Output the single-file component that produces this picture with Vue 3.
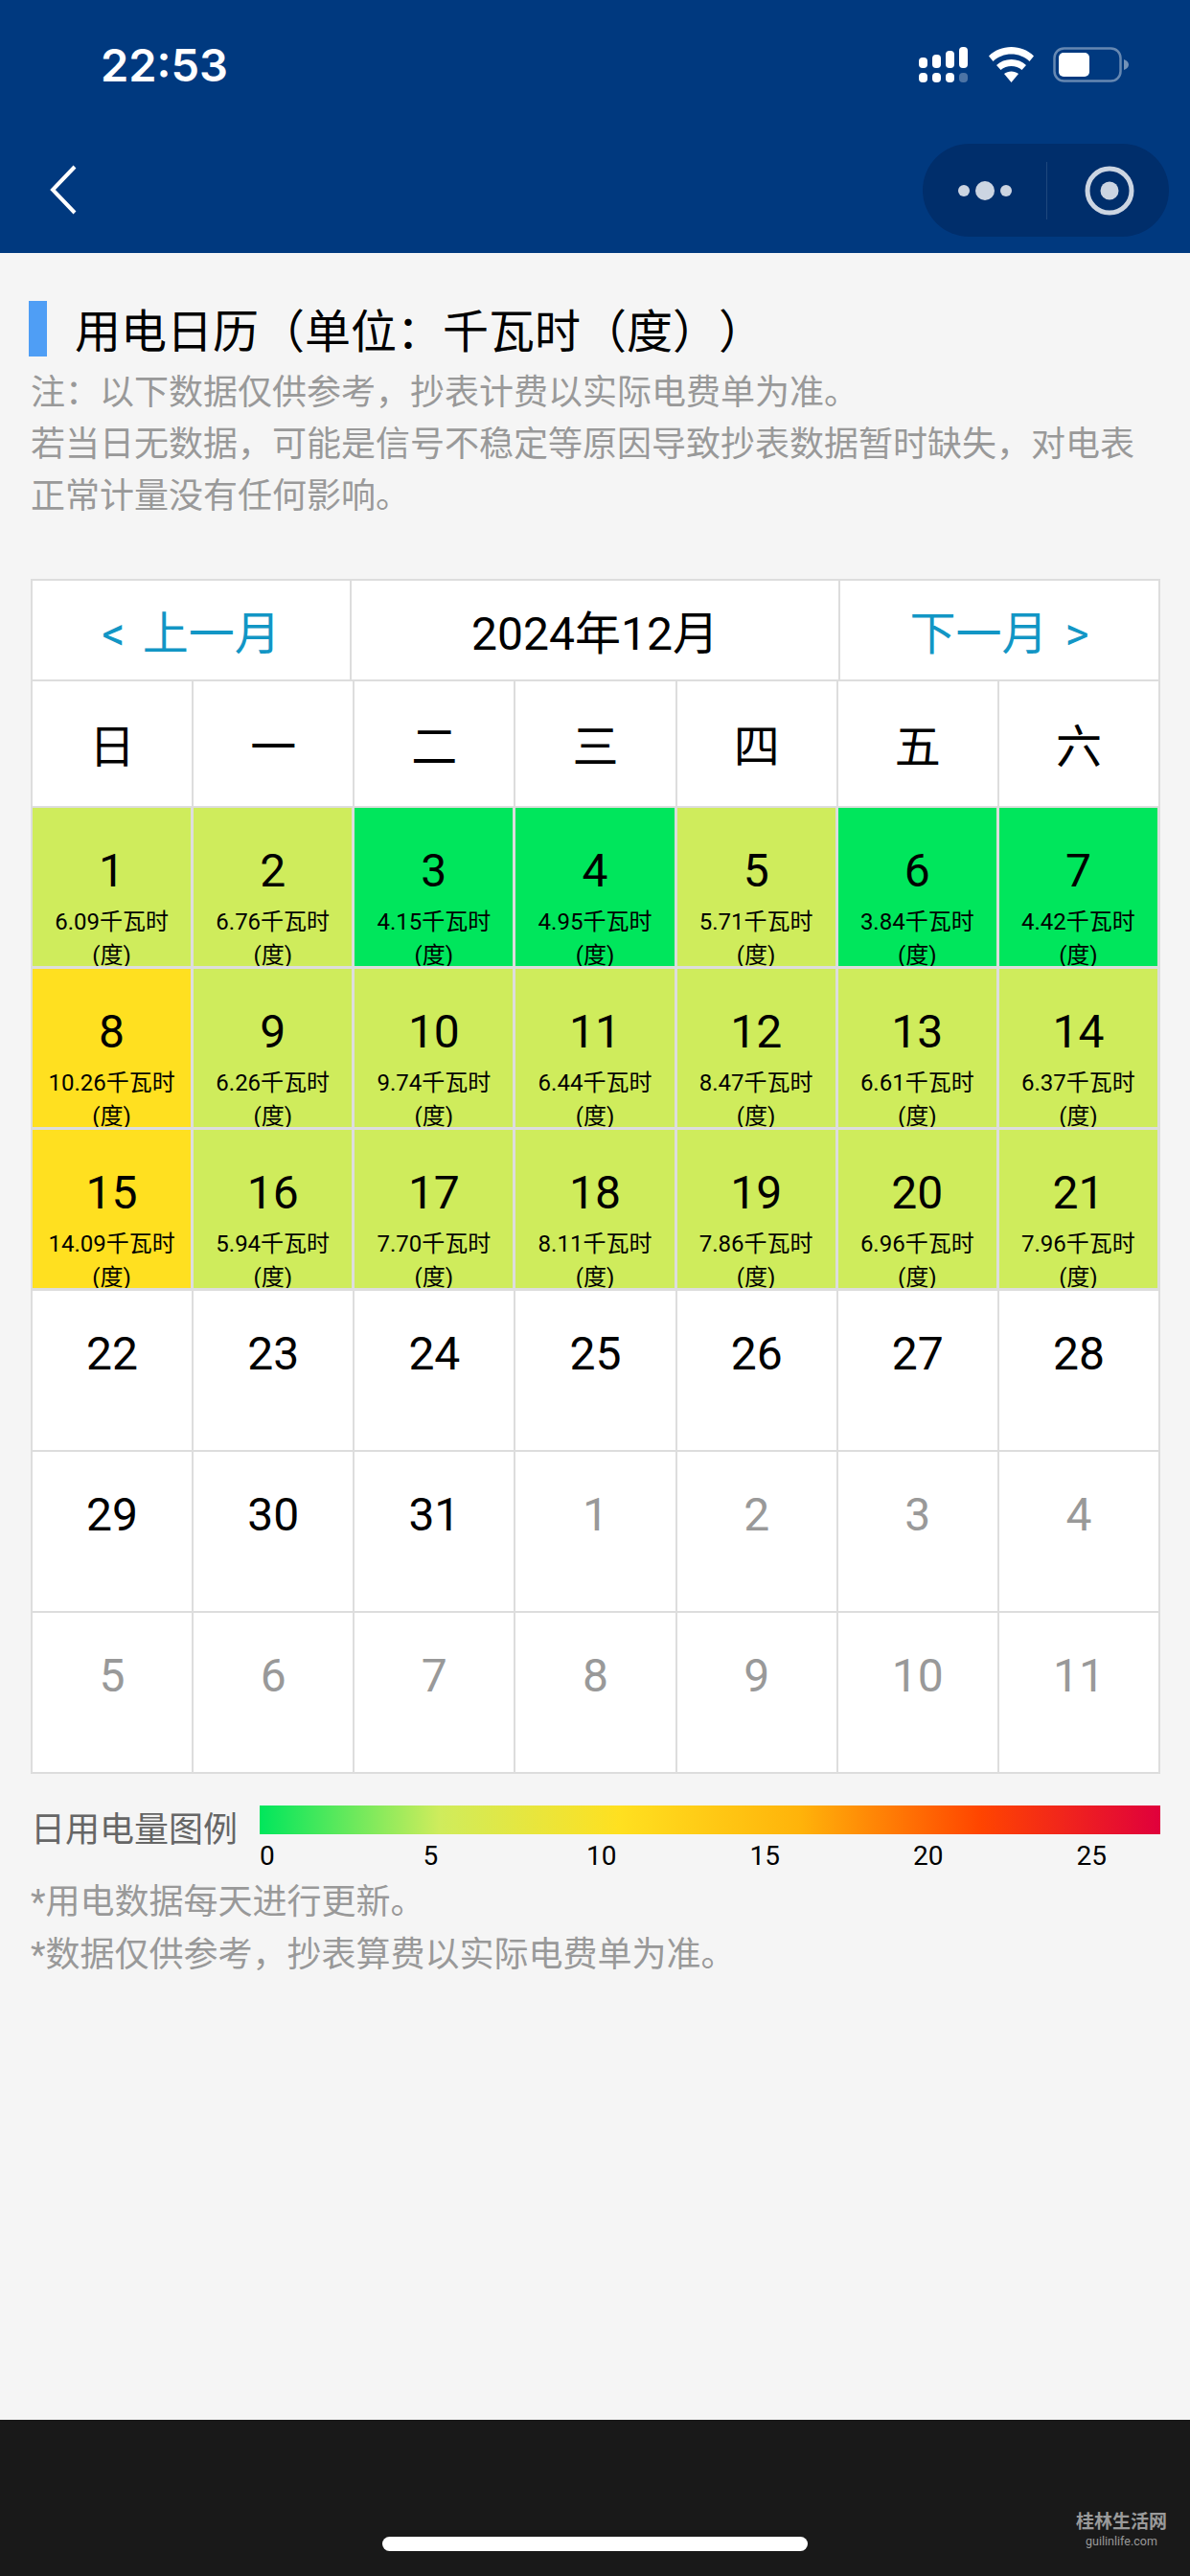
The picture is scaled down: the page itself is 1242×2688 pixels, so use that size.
<script setup>
const usage = {
  1: ['6.09', 'lime'], 2: ['6.76', 'lime'], 3: ['4.15', 'green'], 4: ['4.95', 'green'], 5: ['5.71', 'lime'], 6: ['3.84', 'green'], 7: ['4.42', 'green'],
  8: ['10.26', 'yellow'], 9: ['6.26', 'lime'], 10: ['9.74', 'lime'], 11: ['6.44', 'lime'], 12: ['8.47', 'lime'], 13: ['6.61', 'lime'], 14: ['6.37', 'lime'],
  15: ['14.09', 'yellow'], 16: ['5.94', 'lime'], 17: ['7.70', 'lime'], 18: ['8.11', 'lime'], 19: ['7.86', 'lime'], 20: ['6.96', 'lime'], 21: ['7.96', 'lime']
}
const weekdays = ['日', '一', '二', '三', '四', '五', '六']
const days = []
for (let d = 1; d <= 31; d++) {
  const u = usage[d]
  days.push({ key: 'c' + d, num: d, value: u ? u[0] : '', tone: u ? u[1] : '', muted: false })
}
for (let d = 1; d <= 11; d++) {
  days.push({ key: 'n' + d, num: d, value: '', tone: '', muted: true })
}
const scale = [0, 5, 10, 15, 20, 25]
</script>

<template>
  <div class="page">
    <header class="head">
      <div class="status">
        <span class="time">22:53</span>
        <div class="status-icons">
          <svg class="signal" width="51" height="37" viewBox="0 0 51 37">
            <g fill="#fff">
              <rect x="0" y="11" width="9" height="11" rx="4" />
              <rect x="14" y="8" width="9" height="14" rx="4" />
              <rect x="28" y="4" width="9" height="18" rx="4" />
              <rect x="42" y="0" width="9" height="22" rx="4" />
              <rect x="0" y="27" width="9" height="10" rx="4" />
              <rect x="14" y="27" width="9" height="10" rx="4" />
              <rect x="28" y="27" width="9" height="10" rx="4" />
              <rect x="42" y="27" width="9" height="10" rx="4" opacity="0.3" />
            </g>
          </svg>
          <svg class="wifi" width="47" height="37" viewBox="0 0 47 37">
            <g fill="#fff">
              <path d="M0 9.500C6 3.500 14.500 0 23.500 0S41 3.500 47 9.500L42.500 15C37.500 10 30.500 7.500 23.500 7.500S9.500 10 4.500 15Z" />
              <path d="M8 19C12 15 17.500 13 23.500 13S35 15 39 19L34.500 24C31.500 21.500 27.500 20 23.500 20S15.500 21.500 12.500 24Z" />
              <path d="M16 28C18 26.500 20.800 25.500 23.500 25.500S29 26.500 31 28L23.500 37Z" />
            </g>
          </svg>
          <svg class="battery" width="79" height="37" viewBox="0 0 79 37">
            <rect x="1.500" y="1.500" width="69" height="34" rx="10" fill="none" stroke="#fff" stroke-opacity="0.4" stroke-width="2.500" />
            <rect x="6" y="6" width="32" height="25" rx="5" fill="#fff" />
            <path d="M74 13C77 14 79 16 79 18.500S77 23 74 24Z" fill="#fff" fill-opacity="0.45" />
          </svg>
        </div>
      </div>
      <div class="navbar">
        <svg class="back" width="28" height="52" viewBox="0 0 28 52">
          <path d="M26 2L3 26L26 50" fill="none" stroke="#fff" stroke-width="4" />
        </svg>
        <div class="capsule">
          <svg class="dots" width="62" height="20" viewBox="0 0 62 20">
            <g fill="#ccd5e2">
              <circle cx="6" cy="10" r="6" />
              <circle cx="28" cy="10" r="10" />
              <circle cx="50" cy="10" r="6" />
            </g>
          </svg>
          <span class="capsule-line"></span>
          <svg class="target" width="52" height="52" viewBox="0 0 52 52">
            <circle cx="26" cy="26" r="23" fill="none" stroke="#ccd5e2" stroke-width="5" />
            <circle cx="26" cy="26" r="9.500" fill="#ccd5e2" />
          </svg>
        </div>
      </div>
    </header>

    <main class="content">
      <div class="title-row">
        <span class="title-mark"></span>
        <h1 class="title">用电日历（单位：千瓦时（度））</h1>
      </div>
      <p class="note">注：以下数据仅供参考，抄表计费以实际电费单为准。<br />若当日无数据，可能是信号不稳定等原因导致抄表数据暂时缺失，对电表正常计量没有任何影响。</p>

      <section class="calendar">
        <div class="month-row">
          <div class="month-cell link">&lt; 上一月</div>
          <div class="month-cell">2024年12月</div>
          <div class="month-cell link">下一月 &gt;</div>
        </div>
        <div class="week-row">
          <div v-for="w in weekdays" :key="w" class="week-cell">{{ w }}</div>
        </div>
        <div class="day-grid">
          <div v-for="d in days" :key="d.key" class="day" :class="[d.tone, { muted: d.muted }]">
            <div class="num">{{ d.num }}</div>
            <div v-if="d.value" class="val">{{ d.value }}千瓦时<br />(度)</div>
          </div>
        </div>
      </section>

      <div class="legend">
        <div class="legend-label">日用电量图例</div>
        <div class="legend-scale">
          <div class="bar"></div>
          <div class="ticks">
            <span v-for="s in scale" :key="s">{{ s }}</span>
          </div>
        </div>
      </div>
      <p class="foot-note">*用电数据每天进行更新。</p>
      <p class="foot-note">*数据仅供参考，抄表算费以实际电费单为准。</p>
    </main>

    <footer class="bottom">
      <div class="mark">
        <div class="mark-cn">桂林生活网</div>
        <div class="mark-en">guilinlife.com</div>
      </div>
      <span class="home"></span>
    </footer>
  </div>
</template>

<style>
html, body { margin: 0; padding: 0; background: #f5f5f5; }
</style>

<style scoped>
.page {
  width: 1242px;
  height: 2688px;
  display: flex;
  flex-direction: column;
  overflow: hidden;
  background: #f5f5f5;
  font-family: Roboto, "Noto Sans CJK SC", sans-serif;
  text-spacing-trim: space-all;
  color: #000;
}
.head { height: 264px; background: #00397f; flex: none; }
.status { height: 132px; display: flex; justify-content: space-between; align-items: flex-start; padding: 0 64px 0 105px; box-sizing: border-box; }
.time { margin-top: 40px; font-size: 47px; line-height: 56px; font-weight: 600; color: #fff; font-family: Inter, sans-serif; }
.status-icons { display: flex; align-items: flex-start; margin-top: 49px; }
.wifi { margin-left: 22px; }
.battery { margin-left: 20px; }
.navbar { height: 132px; display: flex; justify-content: space-between; align-items: flex-start; }
.back { margin: 40px 0 0 52px; }
.capsule { width: 257px; height: 97px; margin: 18px 22px 0 0; border-radius: 49px; background: #002e6b; display: flex; align-items: center; box-sizing: border-box; padding-left: 37px; }
.capsule-line { width: 1px; height: 60px; margin-left: 30px; background: rgba(255, 255, 255, 0.12); }
.target { margin-left: 39px; }

.content { flex: 1; padding: 50px 32px 0; box-sizing: border-box; }
.title-row { display: flex; align-items: flex-start; height: 58px; margin-left: -2px; }
.title-mark { width: 19px; height: 58px; background: #4f9ef5; flex: none; }
.title { margin: 4px 0 0 29px; font-size: 48px; line-height: 58px; font-weight: 400; white-space: nowrap; }
.note { margin: 11px 0 0; font-size: 36px; line-height: 54px; color: #999; width: 1178px; }

.calendar { width: 1179px; margin-top: 59px; background: #fff; border-top: 2px solid #ddd; border-left: 2px solid #ddd; box-sizing: border-box; }
.month-row { display: grid; grid-template-columns: 333px 510px 1fr; height: 105px; }
.month-cell { display: flex; align-items: center; justify-content: center; font-size: 48px; padding-bottom: 2px; box-sizing: border-box; border-right: 2px solid #ddd; border-bottom: 2px solid #ddd; }
.link { color: #1296c5; word-spacing: 6px; }
.week-row { display: grid; grid-template-columns: repeat(7, 1fr); height: 132px; }
.week-cell { display: flex; align-items: center; justify-content: center; font-size: 48px; padding-bottom: 2px; box-sizing: border-box; border-right: 2px solid #ddd; border-bottom: 2px solid #ddd; }
.day-grid { display: grid; grid-template-columns: repeat(7, 1fr); grid-auto-rows: 168px; }
.day { border-right: 2px solid #ddd; border-bottom: 2px solid #ddd; text-align: center; overflow: hidden; }
.num { margin-top: 36px; font-size: 48px; line-height: 60px; }
.val { margin-top: 6px; font-size: 24px; line-height: 35px; }
.muted .num { color: #999; }
.lime { background: #cfec5c; border-right-width: 3px; border-bottom-width: 3px; }
.green { background: #00e65c; border-right-width: 3px; border-bottom-width: 3px; }
.yellow { background: #ffe020; border-right-width: 3px; border-bottom-width: 3px; }

.legend { display: flex; margin-top: 33px; width: 1179px; }
.legend-label { width: 239px; margin: 1px 0 0; font-size: 36px; line-height: 50px; color: #666; white-space: nowrap; }
.legend-scale { flex: 1; }
.bar { height: 30px; background: linear-gradient(90deg, #00e65c 0%, #cfec5c 20%, #ffe020 40%, #ffb30a 60%, #ff4500 80%, #e0003c 100%); }
.ticks { display: grid; grid-template-columns: repeat(5, 170.500px) 1fr; margin: 3px 0 1px; font-size: 28px; line-height: 40px; color: #000; }
.foot-note { margin: 0; font-size: 36px; line-height: 55px; color: #999; }

.bottom { height: 163px; flex: none; background: #191919; display: flex; flex-direction: column; align-items: center; position: relative; }
.home { width: 444px; height: 15px; margin-top: 122px; border-radius: 8px; background: #fff; }
.mark { position: absolute; right: 24px; top: 94px; text-align: center; color: #9a9a9a; }
.mark-cn { font-size: 19px; line-height: 26px; font-weight: 700; white-space: nowrap; }
.mark-en { font-size: 12.500px; line-height: 14px; white-space: nowrap; }
</style>
